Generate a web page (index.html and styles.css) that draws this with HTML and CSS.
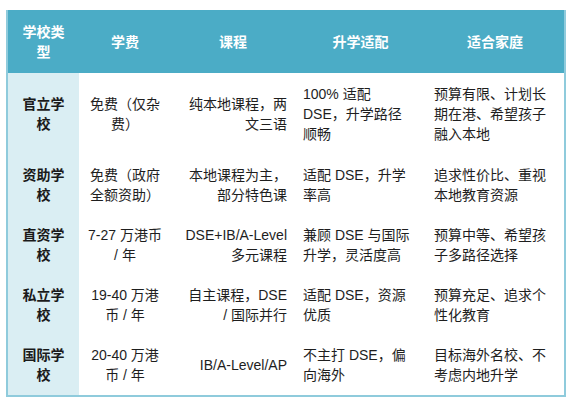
FILE: index.html
```html
<!DOCTYPE html>
<html lang="zh-CN">
<head>
<meta charset="utf-8">
<title>香港学校类型对比</title>
<link rel="stylesheet" href="styles.css">
</head>
<body>
<table class="compare">
  <colgroup>
    <col class="w1"><col class="w2"><col class="w3"><col class="w4"><col class="w5">
  </colgroup>
  <thead>
    <tr>
      <th>学校类<br>型</th>
      <th>学费</th>
      <th>课程</th>
      <th>升学适配</th>
      <th>适合家庭</th>
    </tr>
  </thead>
  <tbody>
    <tr class="first">
      <td class="type">官立学<br>校</td>
      <td class="fee">免费（仅杂<br>费）</td>
      <td class="course">纯本地课程，两<br>文三语</td>
      <td class="fit">100% 适配<br>DSE，升学路径<br>顺畅</td>
      <td class="family">预算有限、计划长<br>期在港、希望孩子<br>融入本地</td>
    </tr>
    <tr>
      <td class="type">资助学<br>校</td>
      <td class="fee">免费（政府<br>全额资助）</td>
      <td class="course">本地课程为主，<br>部分特色课</td>
      <td class="fit">适配 DSE，升学<br>率高</td>
      <td class="family">追求性价比、重视<br>本地教育资源</td>
    </tr>
    <tr>
      <td class="type">直资学<br>校</td>
      <td class="fee">7-27 万港币<br>/ 年</td>
      <td class="course">DSE+IB/A-Level<br>多元课程</td>
      <td class="fit">兼顾 DSE 与国际<br>升学，灵活度高</td>
      <td class="family">预算中等、希望孩<br>子多路径选择</td>
    </tr>
    <tr>
      <td class="type">私立学<br>校</td>
      <td class="fee">19-40 万港<br>币 / 年</td>
      <td class="course">自主课程，DSE<br>/ 国际并行</td>
      <td class="fit">适配 DSE，资源<br>优质</td>
      <td class="family">预算充足、追求个<br>性化教育</td>
    </tr>
    <tr>
      <td class="type">国际学<br>校</td>
      <td class="fee">20-40 万港<br>币 / 年</td>
      <td class="course">IB/A-Level/AP</td>
      <td class="fit">不主打 DSE，偏<br>向海外</td>
      <td class="family">目标海外名校、不<br>考虑内地升学</td>
    </tr>
  </tbody>
</table>
</body>
</html>
```

FILE: styles.css
```css
html, body {
  margin: 0;
  padding: 0;
  background: #ffffff;
}

body {
  padding: 10px 0 0 6px;
  font-family: "Liberation Sans", "Noto Sans CJK SC", sans-serif;
  font-size: 14px;
  line-height: 20px;
  color: #1e1e1e;
}

.compare {
  width: 560px;
  table-layout: fixed;
  border-collapse: separate;
  border-spacing: 0;
  border-style: solid;
  border-color: #8fcbdc;
  border-width: 0 2px 2px 2px;
}

.w1 { width: 71px; }
.w2 { width: 92px; }
.w3 { width: 124px; }
.w4 { width: 131px; }
.w5 { width: 138px; }

.compare th,
.compare td {
  box-sizing: border-box;
  vertical-align: middle;
  white-space: nowrap;
}

.compare th {
  height: 63px;
  padding: 0 8px;
  background: #4bacc6;
  color: #ffffff;
  font-weight: bold;
  text-align: center;
}

.compare td {
  padding: 10px 8px;
}

.compare tr.first td {
  padding-top: 11px;
  padding-bottom: 11px;
}

.type {
  background: #daeef3;
  font-weight: bold;
  text-align: center;
  color: #1a1a1a;
}

.fee {
  text-align: center;
}

.course {
  text-align: right;
  padding-right: 9px;
}

.fit,
.family {
  text-align: left;
}
```
